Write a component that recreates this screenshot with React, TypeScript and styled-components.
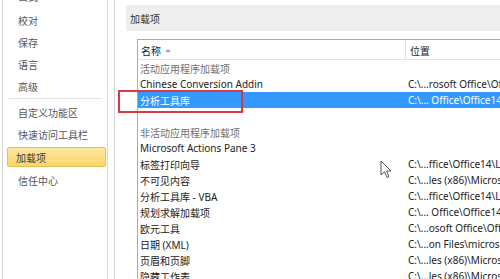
import styled, { createGlobalStyle } from "styled-components";

const GlobalStyle = createGlobalStyle`
    html, body {
        margin: 0;
        padding: 0;
        background: #ffffff;
        overflow: hidden;
    }
    body {
        font-family: "Noto Sans", "Noto Sans CJK SC", sans-serif;
        font-size: 10px;
        color: #222222;
    }
`;

const Window = styled.div`
    position: relative;
    display: flex;
    width: 500px;
    height: 279px;
    overflow: hidden;
    background: #ffffff;
`;

const Nav = styled.div`
    margin-left: 2px;
    width: 104px;
    border-left: 1px solid #d6d6d6;
    border-right: 1px solid #d6d6d6;
    display: flex;
    flex-direction: column;
    margin-top: -17px;
`;

const NavItem = styled.div<{ $active?: boolean; $first?: boolean }>`
    flex-shrink: 0;
    height: ${(p) => (p.$active ? "20px" : p.$first ? "26px" : "22px")};
    display: flex;
    align-items: center;
    padding-left: ${(p) => (p.$active ? "8px" : "15px")};
    margin: ${(p) => (p.$active ? "2px 0 2px 4px" : "0")};
    width: ${(p) => (p.$active ? "99px" : "auto")};
    box-sizing: border-box;
    font-family: "Noto Sans CJK SC", sans-serif;
    font-size: 10px;
    color: ${(p) => (p.$active ? "#3a3a3a" : "#555555")};
    border-radius: 2px;
    border: ${(p) => (p.$active ? "1px solid #e2c05a" : "none")};
    background: ${(p) =>
        p.$active ? "linear-gradient(#fde9a2, #fbd56a)" : "transparent"};
`;

const NavSeparator = styled.div`
    flex-shrink: 0;
    height: 1px;
    margin: 1px 5px 2px 6px;
    background: #e3e3e3;
`;

const Splitter = styled.div`
    width: 6px;
`;

const Content = styled.div`
    flex: 1;
    min-width: 0;
    border-left: 1px solid #d6d6d6;
    display: flex;
    flex-direction: column;
    padding: 5px 0 0 11px;
`;

const SectionHeader = styled.div`
    flex-shrink: 0;
    height: 26px;
    background: #eeeeee;
    display: flex;
    align-items: center;
    padding-left: 4px;
    font-family: "Noto Sans CJK SC", sans-serif;
    font-size: 10px;
    color: #333333;
`;

const ListBox = styled.div`
    flex: 1;
    min-height: 0;
    overflow: hidden;
    margin: 8px 0 0 11px;
    border-top: 1px solid #a9abb0;
    border-left: 1px solid #a9abb0;
    display: flex;
    flex-direction: column;
`;

const HeaderRow = styled.div`
    flex-shrink: 0;
    display: grid;
    grid-template-columns: 267px 1fr;
    height: 19px;
    border-bottom: 1px solid #e3e3e3;
`;

const HeaderCell = styled.div<{ $sep?: boolean }>`
    display: flex;
    align-items: center;
    gap: 4px;
    padding-top: 2px;
    padding-left: ${(p) => (p.$sep ? "4px" : "3px")};
    border-left: ${(p) => (p.$sep ? "1px solid #e3e3e3" : "none")};
    font-family: "Noto Sans CJK SC", sans-serif;
    font-size: 10px;
    color: #222222;
`;

const SortArrow = styled.span`
    width: 0;
    height: 0;
    border-left: 3px solid transparent;
    border-right: 3px solid transparent;
    border-bottom: 3px solid #a0a0a0;
`;

const Row = styled.div<{ $selected?: boolean }>`
    flex-shrink: 0;
    display: grid;
    grid-template-columns: 268px 1fr;
    height: 16px;
    align-items: center;
    white-space: nowrap;
    background: ${(p) => (p.$selected ? "#3399ff" : "transparent")};
    color: ${(p) => (p.$selected ? "#ffffff" : "#222222")};
`;

const NameCell = styled.div<{ $group?: boolean }>`
    padding-left: 2px;
    overflow: hidden;
    color: ${(p) => (p.$group ? "#707070" : "inherit")};
`;

const PathCell = styled.div`
    padding-left: 2px;
    overflow: hidden;
`;

const RedMark = styled.div`
    position: absolute;
    left: 118px;
    top: 90px;
    width: 121px;
    height: 19px;
    border: 2px solid #d43b45;
`;

const Cursor = styled.svg`
    position: absolute;
    left: 380px;
    top: 160px;
`;

type Entry = {
    kind: "group" | "item" | "blank";
    name?: string;
    path?: string;
    selected?: boolean;
};

const navItems = ["校对", "保存", "语言", "高级"];
const navItems2 = ["自定义功能区", "快速访问工具栏"];

const entries: Entry[] = [
    { kind: "group", name: "活动应用程序加载项" },
    { kind: "item", name: "Chinese Conversion Addin", path: "C:\\...rosoft Office\\Office14\\ADDINS\\TCSCCONV.DLL" },
    { kind: "item", name: "分析工具库", path: "C:\\... Office\\Office14\\Library\\Analysis\\ANALYS32.XLL", selected: true },
    { kind: "blank" },
    { kind: "group", name: "非活动应用程序加载项" },
    { kind: "item", name: "Microsoft Actions Pane 3", path: "" },
    { kind: "item", name: "标签打印向导", path: "C:\\...ffice\\Office14\\Library\\WIZARD.XLAM" },
    { kind: "item", name: "不可见内容", path: "C:\\...les (x86)\\Microsoft Office\\Office14" },
    { kind: "item", name: "分析工具库 - VBA", path: "C:\\...ffice\\Office14\\Library\\Analysis" },
    { kind: "item", name: "规划求解加载项", path: "C:\\... Office\\Office14\\Library\\SOLVER" },
    { kind: "item", name: "欧元工具", path: "C:\\...osoft Office\\Office14\\Library" },
    { kind: "item", name: "日期 (XML)", path: "C:\\...on Files\\microsoft shared\\Smart Tag" },
    { kind: "item", name: "页眉和页脚", path: "C:\\...les (x86)\\Microsoft Office\\Office14" },
    { kind: "item", name: "隐藏工作表", path: "C:\\...les (x86)\\Microsoft Office\\Office14" },
];

const App = () => {
    return (
        <Window>
            <GlobalStyle />
            <Nav>
                <NavItem $first>公式</NavItem>
                {navItems.map((n) => (
                    <NavItem key={n}>{n}</NavItem>
                ))}
                <NavSeparator />
                {navItems2.map((n) => (
                    <NavItem key={n}>{n}</NavItem>
                ))}
                <NavItem $active>加载项</NavItem>
                <NavItem>信任中心</NavItem>
            </Nav>
            <Splitter />
            <Content>
                <SectionHeader>加载项</SectionHeader>
                <ListBox>
                    <HeaderRow>
                        <HeaderCell>
                            名称 <SortArrow />
                        </HeaderCell>
                        <HeaderCell $sep>位置</HeaderCell>
                    </HeaderRow>
                    {entries.map((e, i) => (
                        <Row key={i} $selected={e.selected}>
                            <NameCell $group={e.kind === "group"}>{e.name ?? "\u00a0"}</NameCell>
                            <PathCell>{e.path}</PathCell>
                        </Row>
                    ))}
                </ListBox>
            </Content>
            <RedMark />
            <Cursor width="13" height="20" viewBox="0 0 13 20">
                <path
                    d="M1 1 L1 15 L4.5 11.8 L7 17.5 L9 16.6 L6.6 11 L11 11 Z"
                    fill="#ffffff"
                    stroke="#555555"
                    strokeWidth="1"
                    strokeLinejoin="round"
                />
            </Cursor>
        </Window>
    );
};

export default App;
